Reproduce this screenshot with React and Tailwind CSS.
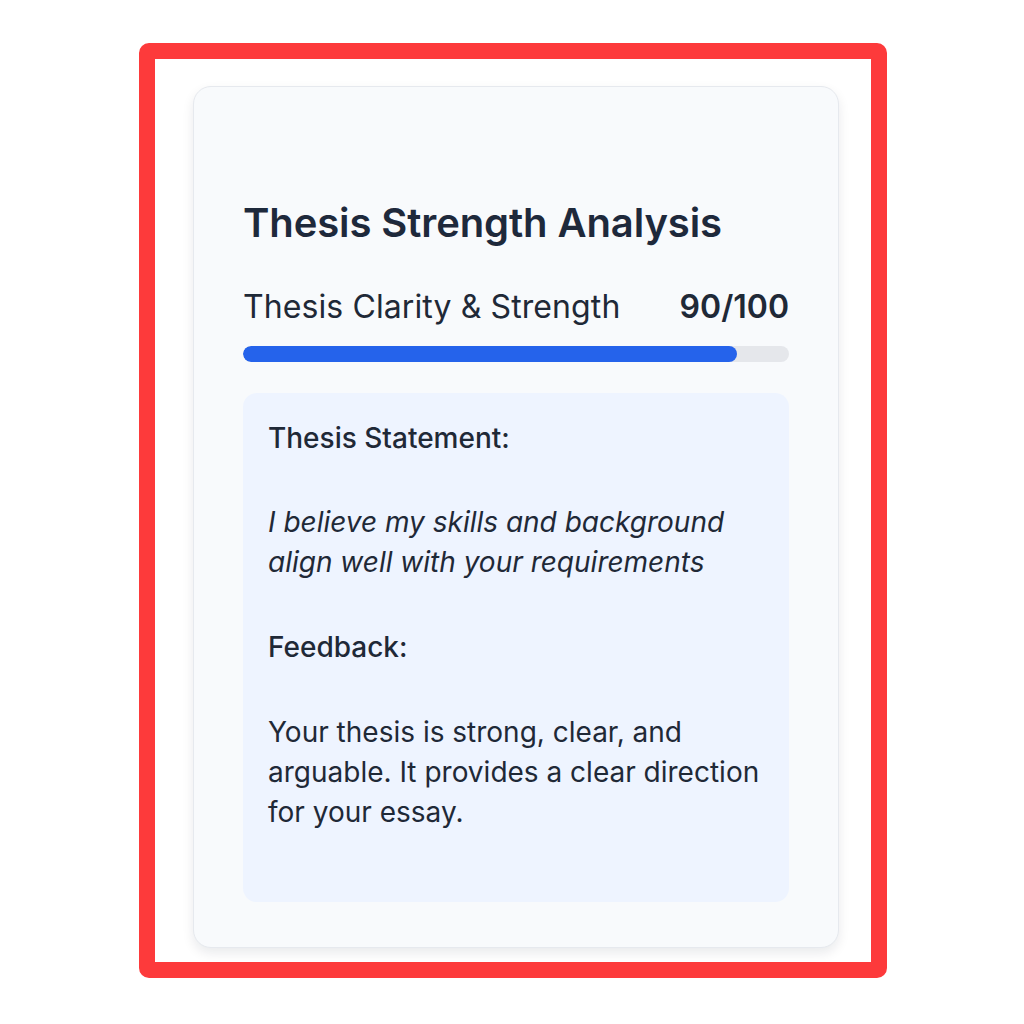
export default function App() {
  const score = 90;
  return (
    <div
      className="w-[1024px] h-[1024px] bg-white pt-[43px] pl-[139px]"
      style={{ fontFamily: "Inter, 'Noto Sans', sans-serif" }}
    >
      <div className="w-[748px] h-[935px] border-[16px] border-[#fd3a3b] rounded-[10px] pl-[38px] pt-[27px]">
        <div className="w-[646px] h-[862px] rounded-[18px] bg-[#f8fafc] border border-[#e6e9ee] shadow-[0_5px_12px_rgba(15,23,42,0.09)] px-[49px] pt-[112px]">
          <h2 className="text-[40px] leading-[48px] font-semibold text-[#1e293b] tracking-[-0.1px]">
            Thesis Strength Analysis
          </h2>

          <div className="mt-[41px] flex items-center justify-between text-[32px] leading-[38px] text-[#1f2937]">
            <span className="tracking-[0.1px]">Thesis Clarity &amp; Strength</span>
            <span className="font-semibold">{score}/100</span>
          </div>

          <div className="mt-[20px] h-[16px] w-full rounded-full bg-[#e5e7eb] overflow-hidden">
            <div
              className="h-full rounded-full bg-[#2563eb]"
              style={{ width: `${score + 0.5}%` }}
            />
          </div>

          <div className="mt-[31px] rounded-[14px] bg-[#eef4ff] px-[25px] pt-[25px] pb-[70px] text-[28px] leading-[40px] text-[#1f2937]">
            <p className="font-medium">Thesis Statement:</p>
            <p className="mt-[44px] italic">
              I believe my skills and background align well with your requirements
            </p>
            <p className="mt-[45px] font-medium">Feedback:</p>
            <p className="mt-[45px]">
              Your thesis is strong, clear, and arguable. It provides a clear direction for your essay.
            </p>
          </div>
        </div>
      </div>
    </div>
  );
}
